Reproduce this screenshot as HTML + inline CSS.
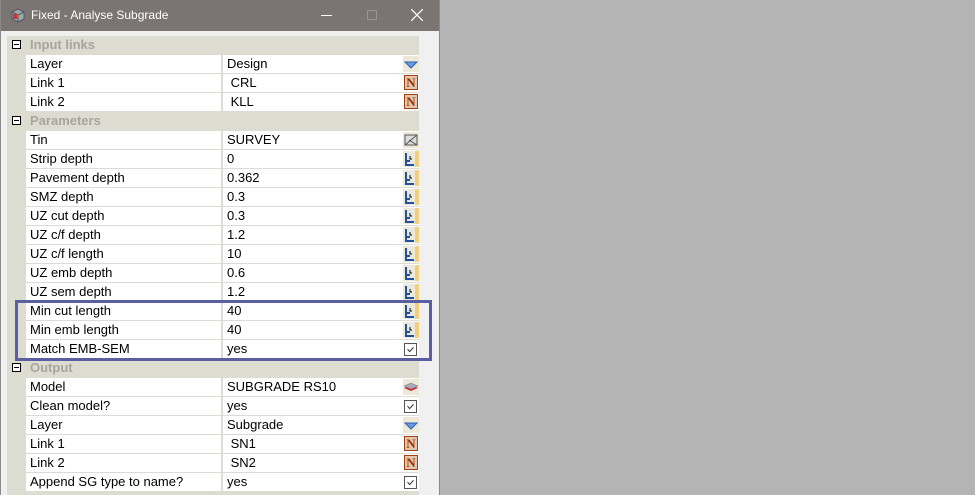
<!DOCTYPE html>
<html><head><style>
*{margin:0;padding:0;box-sizing:border-box}
body{width:975px;height:495px;background:#b4b4b4;font-family:"Liberation Sans",sans-serif;font-size:13px;position:relative;overflow:hidden}
.win{position:absolute;left:0;top:0;width:440px;height:495px;background:#f0f0f0;border-left:1px solid #8a8a8a;border-right:1px solid #8a8a8a}
.title{height:31px;background:#7a7472;color:#fff;font-size:12px;position:relative}
.title .t{position:absolute;left:30px;top:8px}
.grid{position:absolute;left:6px;top:36px;width:412px;background:#dddcd0}
.r{height:19px;position:relative;color:#000}
.h{color:#a6a6a0;font-weight:bold}
.h .bx{position:absolute;left:5px;top:4px;width:9px;height:9px;border:1px solid #000;background:#fff}
.h .bx:after{content:"";position:absolute;left:1px;top:3px;width:5px;height:1px;background:#000}
.h span{position:absolute;left:23px;top:1px}
.l{position:absolute;left:19px;top:0;width:195px;height:19px;background:#fff;border-bottom:1px solid #dcdcd4;padding:1px 0 0 4px}
.v{position:absolute;left:215px;top:0;width:197px;height:19px;background:#fff;border-bottom:1px solid #dcdcd4;border-left:1px solid #dcdcd4;padding:1px 0 0 4px}
.ic{position:absolute;right:0;top:1px;width:16px;height:16px;background:#ece9d8}
.n{background:#e0c8b0;border:1px solid #a04010;color:#a03000;font-family:"Liberation Serif",serif;font-weight:bold;font-size:13px;text-align:center;line-height:14px;width:14px;height:15px;right:1px}
.ck{background:#fff;border:1px solid #555;width:13px;height:13px;right:2px;top:3px}
.hl{position:absolute;left:14px;top:300px;width:417px;height:61px;border:3px solid #5a5fa2}
</style></head><body>
<div class="win">
<div class="title"><svg style="position:absolute;left:9px;top:8px" width="15" height="15"><path d="M2 4L8 1L14 4L14 11L8 14L2 11Z" fill="#9aa" stroke="#556" stroke-width="1"/><path d="M2 4L8 7L14 4M8 7V14" stroke="#556" fill="none"/><rect x="3" y="6" width="4" height="5" fill="#c33"/></svg><span class="t">Fixed - Analyse Subgrade</span>
<div style="position:absolute;left:320px;top:15px;width:11px;height:1px;background:#fff"></div>
<div style="position:absolute;left:366px;top:10px;width:10px;height:10px;border:1px solid #9a9593"></div>
<svg style="position:absolute;left:410px;top:9px" width="12" height="12"><path d="M0 0L12 12M12 0L0 12" stroke="#fff" stroke-width="1.3"/></svg>
</div>
<div class="grid">
<div class="r h"><div class="bx"></div><span>Input links</span></div>
<div class="r"><div class="l">Layer</div><div class="v">Design<svg class="ic" viewBox="0 0 16 16"><path d="M2 6H14L8 12Z" fill="#6a9ae0" stroke="#3060b0"/></svg></div></div>
<div class="r"><div class="l">Link 1</div><div class="v">&nbsp;CRL<div class="ic n">N</div></div></div>
<div class="r"><div class="l">Link 2</div><div class="v">&nbsp;KLL<div class="ic n">N</div></div></div>
<div class="r h"><div class="bx"></div><span>Parameters</span></div>
<div class="r"><div class="l">Tin</div><div class="v">SURVEY<svg class="ic" viewBox="0 0 16 16"><rect x="2" y="3" width="12" height="10" fill="#ddd" stroke="#555"/><path d="M2 13L14 3M6 8L14 13" stroke="#555"/></svg></div></div>
<div class="r"><div class="l">Strip depth</div><div class="v">0<svg class="ic" viewBox="0 0 16 16"><rect x="12" y="0" width="4" height="16" fill="#f0d080"/><path d="M3 2V14H11M3 10H7" stroke="#2050a0" stroke-width="2" fill="none"/><path d="M7 5V8H9" stroke="#000" fill="none"/></svg></div></div>
<div class="r"><div class="l">Pavement depth</div><div class="v">0.362<svg class="ic" viewBox="0 0 16 16"><rect x="12" y="0" width="4" height="16" fill="#f0d080"/><path d="M3 2V14H11M3 10H7" stroke="#2050a0" stroke-width="2" fill="none"/><path d="M7 5V8H9" stroke="#000" fill="none"/></svg></div></div>
<div class="r"><div class="l">SMZ depth</div><div class="v">0.3<svg class="ic" viewBox="0 0 16 16"><rect x="12" y="0" width="4" height="16" fill="#f0d080"/><path d="M3 2V14H11M3 10H7" stroke="#2050a0" stroke-width="2" fill="none"/><path d="M7 5V8H9" stroke="#000" fill="none"/></svg></div></div>
<div class="r"><div class="l">UZ cut depth</div><div class="v">0.3<svg class="ic" viewBox="0 0 16 16"><rect x="12" y="0" width="4" height="16" fill="#f0d080"/><path d="M3 2V14H11M3 10H7" stroke="#2050a0" stroke-width="2" fill="none"/><path d="M7 5V8H9" stroke="#000" fill="none"/></svg></div></div>
<div class="r"><div class="l">UZ c/f depth</div><div class="v">1.2<svg class="ic" viewBox="0 0 16 16"><rect x="12" y="0" width="4" height="16" fill="#f0d080"/><path d="M3 2V14H11M3 10H7" stroke="#2050a0" stroke-width="2" fill="none"/><path d="M7 5V8H9" stroke="#000" fill="none"/></svg></div></div>
<div class="r"><div class="l">UZ c/f length</div><div class="v">10<svg class="ic" viewBox="0 0 16 16"><rect x="12" y="0" width="4" height="16" fill="#f0d080"/><path d="M3 2V14H11M3 10H7" stroke="#2050a0" stroke-width="2" fill="none"/><path d="M7 5V8H9" stroke="#000" fill="none"/></svg></div></div>
<div class="r"><div class="l">UZ emb depth</div><div class="v">0.6<svg class="ic" viewBox="0 0 16 16"><rect x="12" y="0" width="4" height="16" fill="#f0d080"/><path d="M3 2V14H11M3 10H7" stroke="#2050a0" stroke-width="2" fill="none"/><path d="M7 5V8H9" stroke="#000" fill="none"/></svg></div></div>
<div class="r"><div class="l">UZ sem depth</div><div class="v">1.2<svg class="ic" viewBox="0 0 16 16"><rect x="12" y="0" width="4" height="16" fill="#f0d080"/><path d="M3 2V14H11M3 10H7" stroke="#2050a0" stroke-width="2" fill="none"/><path d="M7 5V8H9" stroke="#000" fill="none"/></svg></div></div>
<div class="r"><div class="l">Min cut length</div><div class="v">40<svg class="ic" viewBox="0 0 16 16"><rect x="12" y="0" width="4" height="16" fill="#f0d080"/><path d="M3 2V14H11M3 10H7" stroke="#2050a0" stroke-width="2" fill="none"/><path d="M7 5V8H9" stroke="#000" fill="none"/></svg></div></div>
<div class="r"><div class="l">Min emb length</div><div class="v">40<svg class="ic" viewBox="0 0 16 16"><rect x="12" y="0" width="4" height="16" fill="#f0d080"/><path d="M3 2V14H11M3 10H7" stroke="#2050a0" stroke-width="2" fill="none"/><path d="M7 5V8H9" stroke="#000" fill="none"/></svg></div></div>
<div class="r"><div class="l">Match EMB-SEM</div><div class="v">yes<svg class="ic ck" viewBox="0 0 13 13"><path d="M3 6L5.5 9L10 4" stroke="#333" fill="none" stroke-width="1.2"/></svg></div></div>
<div class="r h"><div class="bx"></div><span>Output</span></div>
<div class="r"><div class="l">Model</div><div class="v">SUBGRADE RS10<svg class="ic" viewBox="0 0 16 16"><path d="M1 9L8 12L15 9L8 6Z" fill="#c33"/><path d="M1 7L8 10L15 7L8 4Z" fill="#aab" stroke="#778" stroke-width=".5"/></svg></div></div>
<div class="r"><div class="l">Clean model?</div><div class="v">yes<svg class="ic ck" viewBox="0 0 13 13"><path d="M3 6L5.5 9L10 4" stroke="#333" fill="none" stroke-width="1.2"/></svg></div></div>
<div class="r"><div class="l">Layer</div><div class="v">Subgrade<svg class="ic" viewBox="0 0 16 16"><path d="M2 6H14L8 12Z" fill="#6a9ae0" stroke="#3060b0"/></svg></div></div>
<div class="r"><div class="l">Link 1</div><div class="v">&nbsp;SN1<div class="ic n">N</div></div></div>
<div class="r"><div class="l">Link 2</div><div class="v">&nbsp;SN2<div class="ic n">N</div></div></div>
<div class="r"><div class="l">Append SG type to name?</div><div class="v">yes<svg class="ic ck" viewBox="0 0 13 13"><path d="M3 6L5.5 9L10 4" stroke="#333" fill="none" stroke-width="1.2"/></svg></div></div>
<div class="r" style="height:3px"></div>
</div>
<div class="hl"></div>
</div>
</body></html>
